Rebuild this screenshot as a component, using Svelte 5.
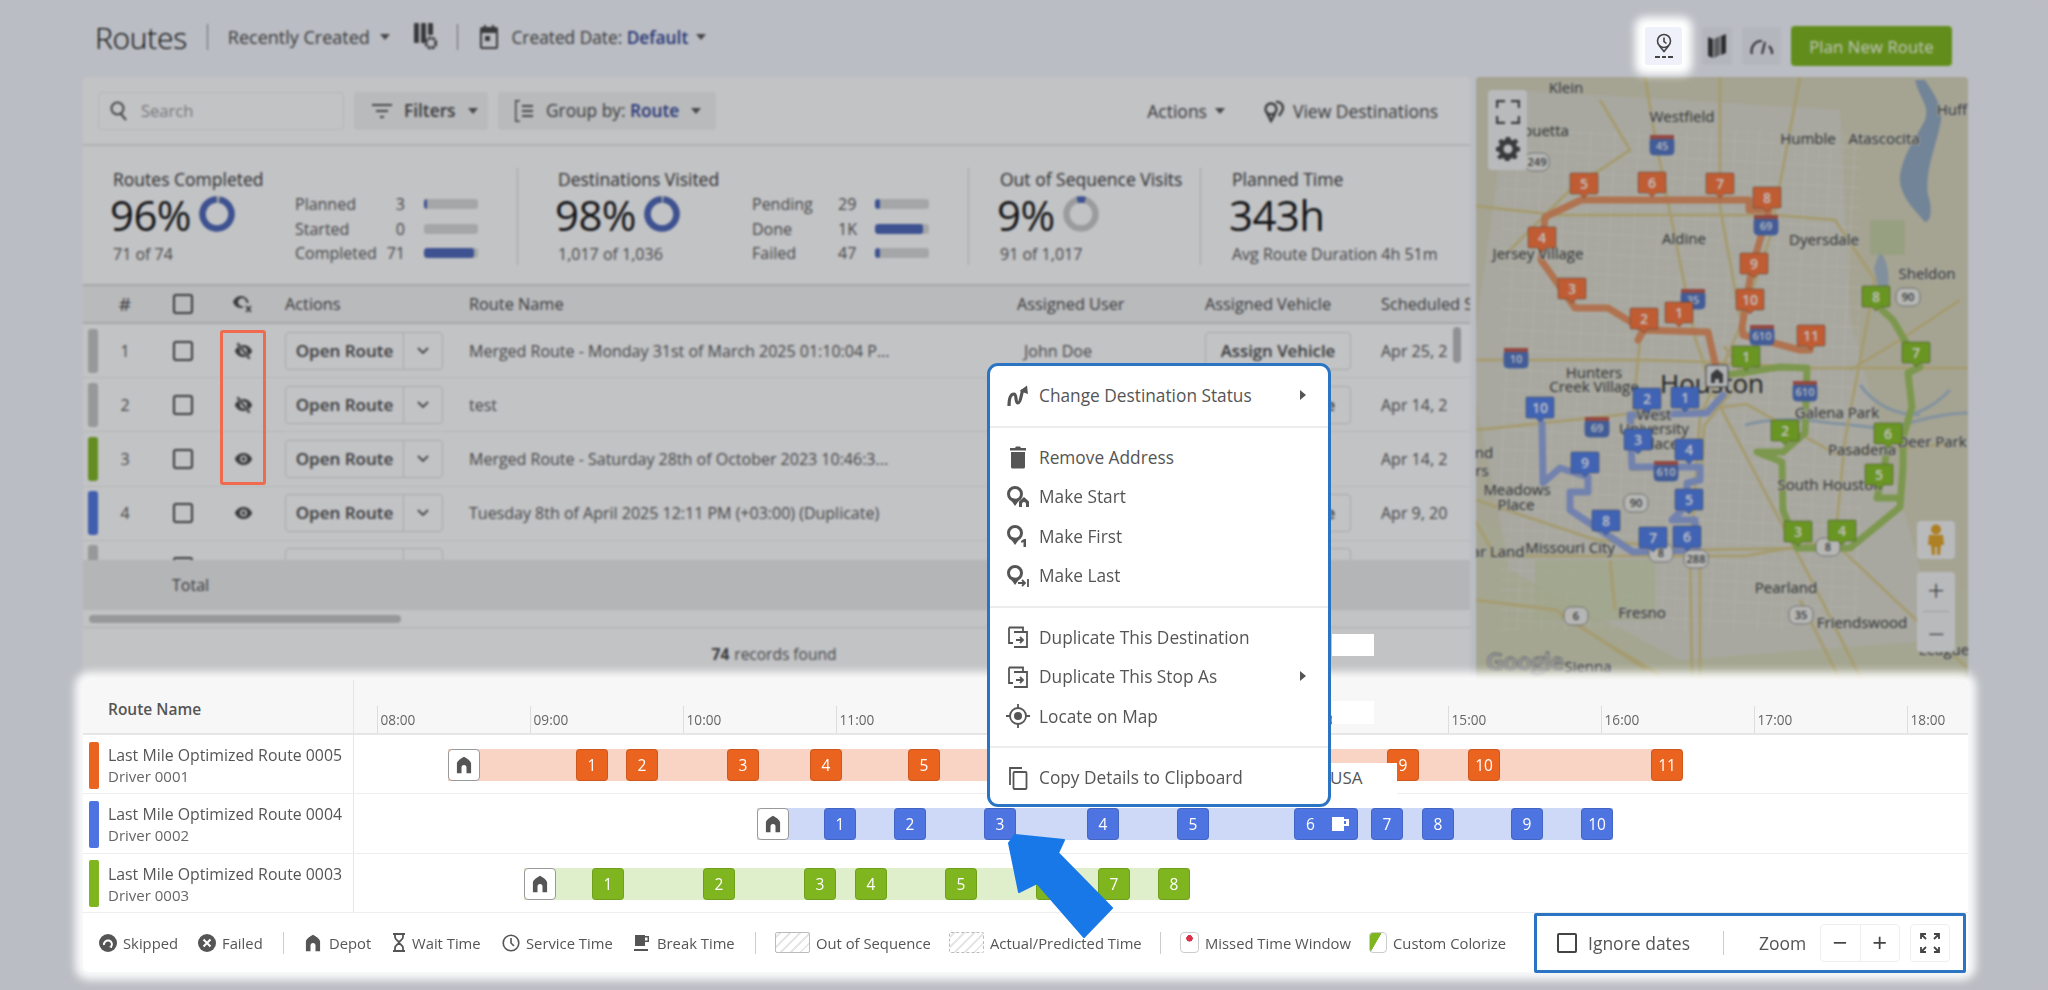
<script>
  const miniA = [
    { label: "Planned", value: "3", pct: 5 },
    { label: "Started", value: "0", pct: 0 },
    { label: "Completed", value: "71", pct: 92 }
  ];
  const miniB = [
    { label: "Pending", value: "29", pct: 10 },
    { label: "Done", value: "1K", pct: 88 },
    { label: "Failed", value: "47", pct: 10 }
  ];

  const rows = [
    { n: 1, color: "#c4c4c4", hidden: true, name: "Merged Route - Monday 31st of March 2025 01:10:04 P...", user: "John Doe", assign: true, date: "Apr 25, 2" },
    { n: 2, color: "#c4c4c4", hidden: true, name: "test", user: "", assign: true, date: "Apr 14, 2" },
    { n: 3, color: "#7fb51f", hidden: false, name: "Merged Route - Saturday 28th of October 2023 10:46:3...", user: "", assign: false, date: "Apr 14, 2" },
    { n: 4, color: "#4d74e0", hidden: false, name: "Tuesday 8th of April 2025 12:11 PM (+03:00) (Duplicate)", user: "", assign: true, date: "Apr 9, 20" },
    { n: "", color: "#c4c4c4", hidden: false, name: "", user: "", assign: true, date: "" }
  ];

  const hours = ["08:00", "09:00", "10:00", "11:00", "12:00", "13:00", "14:00", "15:00", "16:00", "17:00", "18:00"];

  // left edges are page x, chart starts at 354
  const gantt = [
    {
      name: "Last Mile Optimized Route 0005", driver: "Driver 0001", color: "#ea6420", light: "#f9d4c4",
      depot: 448, end: 1682,
      stops: [["1", 576], ["2", 626], ["3", 727], ["4", 810], ["5", 908], ["6", 1000], ["7", 1120], ["8", 1240], ["9", 1387], ["10", 1468], ["11", 1651]]
    },
    {
      name: "Last Mile Optimized Route 0004", driver: "Driver 0002", color: "#4d74e0", light: "#cdd9f7",
      depot: 757, end: 1613,
      stops: [["1", 824], ["2", 894], ["3", 984], ["4", 1087], ["5", 1177], ["6", 1294, true], ["7", 1371], ["8", 1422], ["9", 1511], ["10", 1581]]
    },
    {
      name: "Last Mile Optimized Route 0003", driver: "Driver 0003", color: "#7fb51f", light: "#dfeecb",
      depot: 524, end: 1190,
      stops: [["1", 592], ["2", 703], ["3", 804], ["4", 855], ["5", 945], ["6", 1036], ["7", 1098], ["8", 1158]]
    }
  ];

  const orange = "#fb7238", blue = "#4e7ce8", green = "#86c022";
  const pins = [
    ["5", 1584, 183, orange], ["6", 1652, 182, orange], ["7", 1720, 183, orange], ["8", 1767, 197, orange],
    ["4", 1542, 237, orange], ["9", 1754, 263, orange], ["3", 1572, 288, orange], ["10", 1750, 299, orange],
    ["2", 1644, 318, orange], ["1", 1679, 312, orange], ["11", 1811, 335, orange],
    ["8", 1876, 296, green], ["1", 1746, 356, green], ["7", 1916, 352, green], ["2", 1785, 430, green],
    ["6", 1888, 433, green], ["5", 1879, 474, green], ["3", 1798, 531, green], ["4", 1842, 530, green],
    ["1", 1685, 397, blue], ["2", 1647, 398, blue], ["10", 1540, 407, blue], ["3", 1638, 439, blue],
    ["4", 1689, 449, blue], ["9", 1585, 462, blue], ["5", 1689, 499, blue], ["8", 1606, 520, blue],
    ["7", 1653, 537, blue], ["6", 1687, 536, blue]
  ];

  const labels = [
    ["Klein", 1566, 93], ["ouetta", 1546, 136], ["Westfield", 1682, 122], ["Humble", 1808, 144],
    ["Atascocita", 1884, 144], ["Huff", 1952, 115], ["Jersey Village", 1538, 259], ["Aldine", 1684, 244],
    ["Dyersdale", 1824, 245], ["Sheldon", 1927, 279], ["Hunters", 1594, 378], ["Creek Village", 1594, 392],
    ["Galena Park", 1837, 418], ["West", 1654, 420], ["University", 1654, 434], ["Place", 1660, 449],
    ["Pasadena", 1862, 455], ["Deer Park", 1932, 447], ["Meadows", 1517, 495], ["Place", 1516, 510],
    ["South Houston", 1830, 490], ["Missouri City", 1570, 553], ["ar Land", 1498, 557], ["nd", 1484, 458],
    ["rs", 1482, 476], ["Pearland", 1786, 593], ["Fresno", 1642, 618], ["Friendswood", 1862, 628],
    ["Sienna", 1588, 672], ["League", 1944, 655]
  ];

  const shields = [
    ["45", 1662, 146, true], ["69", 1766, 226, true], ["610", 1762, 336, true], ["610", 1805, 392, true],
    ["10", 1516, 359, true], ["69", 1597, 428, true], ["610", 1666, 472, true], ["35", 1693, 300, true],
    ["90", 1636, 503, false], ["8", 1661, 553, false], ["288", 1696, 559, false], ["8", 1828, 547, false],
    ["6", 1576, 616, false], ["35", 1801, 615, false], ["249", 1537, 162, false], ["90", 1908, 297, false]
  ];
</script>

{#snippet caret()}
  <svg class="caret" viewBox="0 0 10 6"><path d="M0 0h10L5 6z" /></svg>
{/snippet}

{#snippet house(size)}
  <svg width={size} height={size} viewBox="0 0 24 24" fill="#555"><path d="M12 2C8 4 4 7 3.500 10V22H9v-7a3 3 0 0 1 6 0v7h5.500V10C20 7 16 4 12 2z" /></svg>
{/snippet}

{#snippet dup()}
  <svg width="24" height="24" viewBox="0 0 24 24" fill="none" stroke="#555" stroke-width="1.800">
    <path d="M7 2.500h10V6M3 6.500V18h4M3 2.500h4M3 2.500v4M8 7h13v15H8" />
    <path d="M10 15h7M14 12l3 3-3 3" />
  </svg>
{/snippet}

{#snippet pinIcon()}
  <circle cx="9" cy="9" r="6.500" fill="none" stroke="#555" stroke-width="3" />
  <path d="M3.500 13 9 21l4-5.500-2-1.500z" fill="#555" />
{/snippet}

<div class="page">
  <header class="top">
    <h1>Routes</h1>
    <i class="vline"></i>
    <span class="sort">Recently Created {@render caret()}</span>
    <svg class="cols-ic" viewBox="0 0 24 30" fill="#444">
      <rect x="1" y="1" width="5" height="20" rx="1" /><rect x="8" y="1" width="5" height="20" rx="1" /><rect x="15" y="1" width="5" height="12" rx="1" />
      <circle cx="18" cy="21" r="5" fill="none" stroke="#444" stroke-width="3" stroke-dasharray="3 1" />
    </svg>
    <i class="vline second"></i>
    <svg class="cal-ic" viewBox="0 0 20 24" fill="#444">
      <path d="M1 4a2 2 0 0 1 2-2h2V0h2v2h6V0h2v2h2a2 2 0 0 1 2 2v18a2 2 0 0 1-2 2H3a2 2 0 0 1-2-2zm2 4v14h14V8z" /><rect x="6" y="11" width="5" height="5" />
    </svg>
    <span class="date">Created Date: <b>Default</b> {@render caret()}</span>
    <div class="top-right">
      <button class="sq lit" aria-label="Timeline">
        <svg width="20" height="28" viewBox="0 0 20 28" fill="none" stroke="#444" stroke-width="1.600">
          <circle cx="10" cy="9" r="6.500" /><path d="M10 5.500V9.500l2.500 2M5.500 14l4.500 5.500 4.500-5.500" /><path d="M1 25h5M8 25h4M14 25h5" stroke-width="2" />
        </svg>
      </button>
      <button class="sq" aria-label="Map">
        <svg width="20" height="26" viewBox="0 0 20 26"><path d="M1 4l5 2v19l-5-2zM14 3l5-2v19l-5 2z" fill="#333" /><path d="M7 6l6-3v19l-6 3z" fill="#777" /></svg>
      </button>
      <button class="sq wide" aria-label="Gauge">
        <svg width="24" height="20" viewBox="0 0 24 20" fill="none" stroke="#333" stroke-width="2.200"><path d="M2 18A10 10 0 0 1 12 5M22 18a10 10 0 0 0-3-8" /><path d="M12 18 15 6" stroke-width="2" /></svg>
      </button>
      <button class="plan">Plan New Route</button>
    </div>
  </header>

  <div class="main">
    <section class="card">
      <div class="toolbar">
        <label class="search">
          <svg width="18" height="20" viewBox="0 0 18 20" fill="none" stroke="#555" stroke-width="2"><circle cx="7.500" cy="7.500" r="6" /><path d="m11 13 5 6" /></svg>
          <span>Search</span>
        </label>
        <button class="tool filters">
          <svg width="20" height="16" viewBox="0 0 20 16" fill="#555"><path d="M0 1h20v2H0zM4 7h12v2H4zM8 13h4v2H8z" /></svg>
          Filters {@render caret()}
        </button>
        <button class="tool grouped">
          <svg width="20" height="24" viewBox="0 0 20 24" fill="#555"><path d="M1 1h5v1.500H2.500v19H6V23H1zM8 6h11v2H8zM8 11h11v2H8zM8 16h11v2H8z" /></svg>
          <span>Group by: <b>Route</b></span> {@render caret()}
        </button>
        <span class="actions">Actions {@render caret()}</span>
        <span class="view">
          <svg width="22" height="24" viewBox="0 0 22 24" fill="none" stroke="#444" stroke-width="2.400"><circle cx="8" cy="10" r="5.500" /><path d="M4 14l4 8 4-7M13 3a6 6 0 0 1 7 6c0 3-3 6-4 8" /></svg>
          View Destinations
        </span>
      </div>

      <div class="stats">
        <i class="divider d1"></i><i class="divider d2"></i><i class="divider d3"></i>
        <div class="stat">
          <h3>Routes Completed</h3>
          <div class="big"><strong>96%</strong>
            <svg class="donut" viewBox="0 0 36 36"><circle cx="18" cy="18" r="14.500" stroke="#c9c9c9" /><circle cx="18" cy="18" r="14.500" stroke="#4a64b8" stroke-dasharray="87.500 91.100" transform="rotate(-80 18 18)" /></svg>
          </div>
          <p>71 of 74</p>
        </div>
        <div class="mini m1">
          {#each miniA as m}
            <span class="ml">{m.label}</span><span class="mv">{m.value}</span>
            <span class="track"><i style="width:{m.pct}%"></i></span>
          {/each}
        </div>
        <div class="stat">
          <h3>Destinations Visited</h3>
          <div class="big"><strong>98%</strong>
            <svg class="donut" viewBox="0 0 36 36"><circle cx="18" cy="18" r="14.500" stroke="#c9c9c9" /><circle cx="18" cy="18" r="14.500" stroke="#4a64b8" stroke-dasharray="88.500 91.100" transform="rotate(-84 18 18)" /></svg>
          </div>
          <p>1,017 of 1,036</p>
        </div>
        <div class="mini m2">
          {#each miniB as m}
            <span class="ml">{m.label}</span><span class="mv left">{m.value}</span>
            <span class="track"><i style="width:{m.pct}%"></i></span>
          {/each}
        </div>
        <div class="stat">
          <h3>Out of Sequence Visits</h3>
          <div class="big"><strong>9%</strong>
            <svg class="donut" viewBox="0 0 36 36"><circle cx="18" cy="18" r="14.500" stroke="#c9c9c9" /><circle cx="18" cy="18" r="14.500" stroke="#4a64b8" stroke-dasharray="8 91.100" transform="rotate(-105 18 18)" /></svg>
          </div>
          <p>91 of 1,017</p>
        </div>
        <div class="stat">
          <h3>Planned Time</h3>
          <div class="big"><strong>343h</strong></div>
          <p>Avg Route Duration 4h 51m</p>
        </div>
      </div>

      <div class="thead">
        <span></span><span class="hash">#</span>
        <span class="c"><i class="check"></i></span>
        <span class="c">
          <svg width="20" height="18" viewBox="0 0 20 18" fill="#444"><path d="M8 1C4 1 1 4 0 7c1 3 4 6 8 6l2-.2V11a4 4 0 1 1 3-4c0 .4.800.700 1.600.700h1.200C15 4 12 1 8 1z" /><path d="m13 11 5 6m0-6-5 6" stroke="#444" stroke-width="1.800" /></svg>
        </span>
        <span class="act-h">Actions</span><span>Route Name</span><span>Assigned User</span><span>Assigned Vehicle</span><span class="nowrap">Scheduled Start</span>
      </div>
      <div class="tbody">
        <div class="vscroll"></div>
        {#each rows as r}
          <div class="row">
            <span class="tab-wrap"><i class="tab" style="background:{r.color}"></i></span>
            <span class="num">{r.n}</span>
            <span class="c"><i class="check"></i></span>
            <span class="c">
              {#if r.n}
                <svg width="19" height="18" viewBox="0 0 22 20" fill="#444">
                  <path fill-rule="evenodd" d="M11 3C6 3 2.500 6.500 1 10c1.500 3.500 5 7 10 7s8.500-3.500 10-7c-1.500-3.500-5-7-10-7zm0 3a4 4 0 1 1 0 8 4 4 0 0 1 0-8z" />
                  {#if r.hidden}<path d="M4 1l14 18" stroke="#c2c2c2" stroke-width="4" /><path d="M4 1l14 18" stroke="#444" stroke-width="2" />{:else}<circle cx="11" cy="10" r="2.200" />{/if}
                </svg>
              {/if}
            </span>
            <span class="open">
              <b>Open Route</b>
              <i><svg width="12" height="8" viewBox="0 0 12 8" fill="none" stroke="#555" stroke-width="1.800"><path d="m1 1 5 5 5-5" /></svg></i>
            </span>
            <span class="rname">{r.name}</span>
            <span class="ruser">{r.user}</span>
            <span>{#if r.assign}<b class="assign">Assign Vehicle</b>{/if}</span>
            <span class="nowrap">{r.date}</span>
          </div>
        {/each}
      </div>
      <div class="total"><span>Total</span></div>
      <div class="hscroll"><i></i></div>
      <div class="records"><b>74</b> records found</div>
    </section>

    <section class="map">
      <svg class="map-svg" viewBox="1476 77 492 603" preserveAspectRatio="none">
        <defs>
          <pattern id="streets" width="24" height="20" patternUnits="userSpaceOnUse" patternTransform="rotate(3)">
            <path d="M0 0h24M0 10h24M0 0v20M12 0v20" stroke="#eaeae0" stroke-width=".8" fill="none" />
          </pattern>
        </defs>
        <rect x="1476" y="77" width="492" height="603" fill="#d8d4ba" />
        <path d="M1476 520 1700 620l268-30v90H1476z" fill="#d6d8b8" />
        <path d="M1510 90l330 20 10 210 90 320-260 20-170-90-40-200z" fill="#dcdacc" />
        <rect x="1500" y="130" width="360" height="500" fill="url(#streets)" opacity=".8" />
        <path d="M1915 80c5 20 15 25 10 40-10 20-20 30-25 55-2 20 15 35 25 47 7 0 7-17 3-27-3-25 7-45 12-70 5-15-5-30-15-45z" fill="#92a9c0" />
        <path d="M1880 250c6 10 10 20 8 40l-8 8-6-30z" fill="#a8bac9" />
        <g fill="none" stroke="#a8bccb" stroke-width="3">
          <path d="M1745 425c30-8 60-6 85-2 30 2 50 8 70 2 20-4 40-12 68-12" />
          <path d="M1860 385c15 20 35 30 60 30M1950 390c-15 15-25 20-40 25" />
        </g>
        <rect x="1870" y="220" width="35" height="35" fill="#c2cd9e" opacity=".8" />
        <rect x="1535" y="560" width="120" height="60" fill="#d2d8b0" opacity=".8" />
        <g fill="none" stroke="#d8c98c" stroke-width="3">
          <path d="M1476 360h170l65 2 105 6h152" />
          <path d="M1476 430l170-18 40 0 60-8 90 50 112-10" />
          <path d="M1645 77l10 60 40 200 20 60 100 190 60 120" />
          <path d="M1600 100l30 50-60 40-40 40-30 30" />
          <path d="M1800 77l-30 160-30 90-40 90-10 140 2 120" />
          <path d="M1560 215h215l60 5 40 60-30 160-10 100-90 16h-250l-50-90-15-130 5-70 40-60z" />
          <path d="M1476 600l80 10 90 60" />
          <path d="M1476 500l120 40 100 10 110-2M1840 548l127 120" />
          <path d="M1700 560v120M1960 300l-60 40-50 30" />
          <path d="M1640 340l-6 60-2 70 70-4 2-40 40-50-20-30" />
          <path d="M1720 77v130l20 110" />
          <path d="M1560 615l100 60M1800 600l40 80M1610 560l5 50" />
        </g>
        <g fill="none" stroke-linejoin="round" stroke-linecap="round">
          <polyline stroke="#e6915e" stroke-width="7" points="1718,376 1708,332 1643,330 1638,340 1644,330 1608,308 1575,308 1541,260 1545,217 1581,200 1749,200 1749,210 1769,210 1752,267 1742,327 1743,335 1800,350 1810,350" />
          <polyline stroke="#a0c45c" stroke-width="7" points="1718,376 1747,372 1780,367 1807,368 1805,433 1783,452 1757,452 1782,462 1783,510 1797,548 1850,548 1900,507 1903,467 1903,437 1912,407 1908,373 1920,367 1893,320 1882,310" />
          <polyline stroke="#a0c45c" stroke-width="7" points="1887,450 1883,475 1877,498 1900,498" />
          <polyline stroke="#92a6e0" stroke-width="7" points="1723,395 1707,413 1630,415 1632,467 1700,467 1700,480 1687,483 1687,505 1672,520 1695,520 1697,550 1633,552 1570,510 1570,492 1588,492 1588,477 1560,468 1543,483 1542,423" />
        </g>
        {#each labels as [t, x, y]}
          <text {x} {y} class="lbl">{t}</text>
        {/each}
        <text x="1712" y="393" class="lbl city">Houston</text>
        {#each shields as [t, x, y, inter]}
          <rect x={x - 12} y={y - 9} width="24" height="18" rx={inter ? 4 : 7} fill={inter ? "#4f72c0" : "#efefe8"} stroke={inter ? "#4f72c0" : "#777"} stroke-width=".8" />
          {#if inter}<rect x={x - 12} y={y - 11} width="24" height="4" fill="#c0574a" />{/if}
          <text {x} y={y + 4} class="shield" fill={inter ? "#eef1f8" : "#444"}>{t}</text>
        {/each}
        <rect x="1706" y="365" width="22" height="22" rx="2" fill="#e8e8e8" stroke="#444" />
        <path d="M1717 369l-6 5v9h4v-4h4v4h4v-9z" fill="#444" />
        {#each pins as [t, x, y, fill]}
          <path d="M{x - 13} {y - 10}h26a1.500 1.500 0 0 1 1 1.500v18a1.500 1.500 0 0 1-1 1.500h-9l-4 4-4-4h-9a1.500 1.500 0 0 1-1-1.500v-18a1.500 1.500 0 0 1 1-1.500z" {fill} stroke="#333" stroke-opacity=".4" />
          <text {x} y={y + 6} class="pin">{t}</text>
        {/each}
        <text x="1486" y="670" class="google">Google</text>
      </svg>
      <div class="map-ctl top-ctl">
        <svg width="24" height="24" viewBox="0 0 24 24" fill="none" stroke="#444" stroke-width="2.400"><path d="M1 8V1h8M15 1h8v7M23 16v7h-8M9 23H1v-7" /></svg>
        <svg width="24" height="24" viewBox="0 0 24 24" fill="#444"><path fill-rule="evenodd" d="M10 1h4l.600 3 2.400 1 2.600-1.700 2.800 2.800L20 8.700l1 2.400 3 .6v4l-3 .6-1 2.400 1.700 2.600-2.800 2.800-2.600-1.700-2.400 1-.6 3h-4l-.6-3-2.400-1-2.600 1.700-2.800-2.800L4 18.700l-1-2.400-3-.6v-4l3-.6 1-2.400-1.700-2.600 2.800-2.800L7 5l2.400-1zM12 9a4.500 4.500 0 1 0 0 9 4.500 4.500 0 0 0 0-9z" transform="translate(0 -1.500)" /></svg>
      </div>
      <div class="map-ctl peg">
        <svg width="22" height="32" viewBox="0 0 22 32" fill="#e2a322"><circle cx="11" cy="5.500" r="5" /><path d="M4 11h14l1 10h-3l-1 10h-3v-8h-2v8H7L6 21H3z" /></svg>
      </div>
      <div class="map-ctl zoom">
        <span>+</span><hr /><span>−</span>
      </div>
    </section>
  </div>

  <section class="panel">
    <div class="g-head">
      <div class="g-title">Route Name</div>
      <div class="g-hours">
        {#each hours as h}<span class="hour">{h}</span>{/each}
      </div>
    </div>
    {#each gantt as g}
      <div class="g-row">
        <div class="g-name">
          <i class="g-tab" style="background:{g.color}"></i>
          <div>
            <div class="g-route">{g.name}</div>
            <div class="g-driver">{g.driver}</div>
          </div>
        </div>
        <div class="g-chart">
          <div class="g-bar" style="left:{g.depot - 354}px;width:{g.end - g.depot}px;background:{g.light}"></div>
          <div class="g-depot" style="left:{g.depot - 354}px">{@render house(20)}</div>
          {#each g.stops as [t, x, brk]}
            <div class="g-stop" class:brk style="left:{x - 354}px;background:{g.color}">
              <span>{t}</span>
              {#if brk}
                <svg width="18" height="16" viewBox="0 0 18 16" fill="#fff"><path d="M0 1h12v14H0zM12 3h5v7h-5V8h2V5h-2z" /></svg>
              {/if}
            </div>
          {/each}
        </div>
      </div>
    {/each}
    <div class="legend">
      <div class="lg-items">
        <span class="li" style="width:99px">
          <svg width="18" height="18" viewBox="0 0 18 18"><circle cx="9" cy="9" r="9" fill="#555" /><path d="M5 11a4 4 0 1 1 7 2" fill="none" stroke="#fff" stroke-width="2" /><path d="m10 13 3 1 0-3" fill="#fff" /></svg>Skipped
        </span>
        <span class="li" style="width:85px">
          <svg width="18" height="18" viewBox="0 0 18 18"><circle cx="9" cy="9" r="9" fill="#555" /><path d="m5.500 5.500 7 7m0-7-7 7" stroke="#fff" stroke-width="2" /></svg>Failed
        </span>
        <i class="lg-sep"></i>
        <span class="li" style="width:89px">{@render house(20)}Depot</span>
        <span class="li" style="width:110px">
          <svg width="14" height="19" viewBox="0 0 14 19" fill="none" stroke="#555" stroke-width="1.800"><path d="M1 1h12M1 18h12M3 1v3c0 3 4 4 4 5.500S3 12 3 15v3M11 1v3c0 3-4 4-4 5.500s4 2.500 4 5.500v3" /></svg>Wait Time
        </span>
        <span class="li" style="width:131px">
          <svg width="18" height="18" viewBox="0 0 18 18" fill="none" stroke="#555" stroke-width="1.600"><circle cx="9" cy="9" r="7.800" /><path d="M9 4v5l3 3" /></svg>Service Time
        </span>
        <span class="li" style="width:122px">
          <svg width="18" height="18" viewBox="0 0 18 18" fill="#555"><path d="M2 1h10v11H2zM12 2h4v6h-4V6.500h2.500v-3H12zM1 15h14v2H1z" /></svg>Break Time
        </span>
        <i class="lg-sep"></i>
        <span class="li" style="width:174px"><i class="swatch solid"></i>Out of Sequence</span>
        <span class="li" style="width:211px"><i class="swatch dashed"></i>Actual/Predicted Time</span>
        <i class="lg-sep"></i>
        <span class="li" style="width:189px"><i class="sw-missed"></i>Missed Time Window</span>
        <span class="li"><i class="sw-custom"></i>Custom Colorize</span>
      </div>
      <div class="ignore">
        <i class="check big-check"></i>
        <span class="ig-label">Ignore dates</span>
        <i class="ig-sep"></i>
        <span class="ig-zoom">Zoom</span>
        <span class="zoom-btns"><b>−</b><b>+</b></span>
        <span class="zoom-fit">
          <svg width="20" height="20" viewBox="0 0 20 20" fill="none" stroke="#444" stroke-width="1.800"><path d="M1 6V1h5M1 1l5 5M19 6V1h-5M19 1l-5 5M1 14v5h5M1 19l5-5M19 14v5h-5M19 19l-5-5" /></svg>
        </span>
      </div>
    </div>
  </section>

  <div class="overlay"></div>
  <div class="redbox"></div>
  <div class="chip c1"></div>
  <div class="chip c2"></div>
  <div class="chip usa">USA</div>

  <div class="menu">
    <div class="group">
      <div class="mi">
        <svg width="24" height="24" viewBox="0 0 24 24" fill="none" stroke="#555" stroke-width="3.200"><path d="M3 22C3 14 5 10 8 10s1 9 4 9 3-10 5-13" /><path d="M13.500 7 21 1.500 22 10z" fill="#555" stroke="none" /></svg>
        Change Destination Status <em></em>
      </div>
    </div>
    <div class="group">
      <div class="mi">
        <svg width="24" height="24" viewBox="0 0 24 24" fill="#555"><path d="M5 7h14v15a1.500 1.500 0 0 1-1.500 1.500h-11A1.500 1.500 0 0 1 5 22zM4 3h5l1-1.500h4L15 3h5v2.500H4z" /></svg>
        Remove Address
      </div>
      <div class="mi">
        <svg width="24" height="24" viewBox="0 0 24 24">{@render pinIcon()}<path d="M18 12l-5 4.500V22h3v-3a2 2 0 0 1 4 0v3h3v-5.500z" fill="#555" /></svg>
        Make Start
      </div>
      <div class="mi">
        <svg width="24" height="24" viewBox="0 0 24 24">{@render pinIcon()}<path d="M15 17l3-2h2v8h-2.500v-5l-2 1z" fill="#555" /></svg>
        Make First
      </div>
      <div class="mi">
        <svg width="24" height="24" viewBox="0 0 24 24">{@render pinIcon()}<path d="M12 19h7M16 16l3 3-3 3M22 15v8" fill="none" stroke="#555" stroke-width="1.800" /></svg>
        Make Last
      </div>
    </div>
    <div class="group">
      <div class="mi">{@render dup()}Duplicate This Destination</div>
      <div class="mi">{@render dup()}Duplicate This Stop As <em></em></div>
      <div class="mi">
        <svg width="24" height="24" viewBox="0 0 24 24" fill="none" stroke="#555" stroke-width="1.800"><circle cx="12" cy="12" r="8" /><circle cx="12" cy="12" r="4" fill="#555" stroke="none" /><path d="M12 0v4M12 20v4M0 12h4M20 12h4" /></svg>
        Locate on Map
      </div>
    </div>
    <div class="group last">
      <div class="mi">
        <svg width="24" height="24" viewBox="0 0 24 24" fill="none" stroke="#555" stroke-width="1.800"><path d="M4 19V2h12" /><rect x="7.500" y="6" width="13" height="17" rx="1" /></svg>
        Copy Details to Clipboard
      </div>
    </div>
  </div>

  <svg class="arrow" width="110" height="105" viewBox="1005 833 110 105"><path d="M1015 835 1064 840 1058 853 1112 908 1084 937 1037 883 1019 892 1009 843z" fill="#1878e8" stroke="#1878e8" stroke-width="2" stroke-linejoin="round" /></svg>
</div>

<style>
  :global(body) {
    margin: 0;
    font-family: "Open Sans", "Liberation Sans", sans-serif;
    color: #444;
  }

  * {
    box-sizing: border-box;
  }

  i,
  em {
    font-style: normal;
  }

  button {
    font: inherit;
    border: 0;
    padding: 0;
    color: inherit;
  }

  .page {
    position: relative;
    width: 2048px;
    height: 990px;
    overflow: hidden;
    background: #f5f7fc;
    padding-top: 10px;
  }

  .overlay {
    position: absolute;
    inset: 0;
    z-index: 2;
    background: rgba(30, 32, 40, 0.27);
    backdrop-filter: blur(0.8px);
  }

  /* top bar */
  .top {
    display: flex;
    align-items: center;
    height: 54px;
    padding-left: 95px;
    margin-bottom: 13px;
  }

  h1 {
    margin: 0 20px 0 0;
    font-size: 30px;
    font-weight: 300;
    color: #000;
    letter-spacing: -0.3px;
  }

  .vline {
    width: 1px;
    height: 26px;
    background: #888;
    margin-right: 20px;
  }

  .vline.second {
    margin: 0 21px 0 20px;
  }

  .sort,
  .date {
    font-size: 18px;
    display: inline-flex;
    align-items: center;
    gap: 6px;
    white-space: pre;
  }

  .date {
    font-size: 17.300px;
    gap: 0;
  }

  .date b {
    color: #2c3f94;
    font-weight: 600;
    margin-right: 8px;
  }

  .caret {
    width: 10px;
    height: 6px;
    fill: #555;
    flex: none;
  }

  .cols-ic {
    width: 24px;
    height: 30px;
    margin-left: 23px;
  }

  .cal-ic {
    width: 20px;
    height: 24px;
    margin-right: 12px;
  }

  .top-right {
    margin-left: auto;
    margin-right: 96px;
    margin-top: 18px;
    display: flex;
    align-items: center;
    gap: 10px;
  }

  .sq {
    width: 30px;
    height: 38px;
    background: #eceef6;
    border-radius: 3px;
    display: flex;
    align-items: center;
    justify-content: center;
  }

  .sq.wide {
    width: 39px;
  }

  .sq.lit {
    width: 37px;
    margin-right: 10px;
    position: relative;
    z-index: 3;
    background: #eff1fa;
    box-shadow: 0 0 9px 10px #fff;
  }

  .plan {
    width: 161px;
    height: 40px;
    background: #7cb618;
    color: #fbfff0;
    border-radius: 4px;
    font-size: 16.500px;
    font-weight: 500;
    letter-spacing: 0.2px;
  }

  /* table card */
  .main {
    display: flex;
    gap: 6px;
    padding-left: 83px;
    height: 603px;
  }

  .card {
    width: 1387px;
    background: #fff;
    border-radius: 4px;
    display: flex;
    flex-direction: column;
    overflow: hidden;
  }

  .toolbar {
    display: flex;
    align-items: center;
    height: 69px;
    padding: 0 32px 0 15px;
    border-bottom: 2px solid #e6e6e6;
  }

  .search {
    width: 246px;
    height: 38px;
    border: 1px solid #eee;
    border-radius: 4px;
    display: flex;
    align-items: center;
    gap: 13px;
    padding-left: 11px;
    margin-right: 10px;
    font-size: 16.500px;
    color: #999;
  }

  .tool {
    height: 38px;
    background: #f3f3f3;
    border-radius: 4px;
    display: flex;
    align-items: center;
    gap: 12px;
    font-size: 17.300px;
  }

  .filters {
    width: 134px;
    padding-left: 18px;
    font-weight: 600;
    margin-right: 10px;
  }

  .grouped {
    width: 218px;
    padding-left: 16px;
    gap: 12px;
  }

  .tool b {
    color: #2c3f94;
    font-weight: 600;
  }

  .actions,
  .view {
    display: flex;
    align-items: center;
    font-size: 17.500px;
    font-weight: 500;
    gap: 8px;
  }

  .actions {
    margin-left: auto;
    margin-right: 38px;
  }

  .stats {
    position: relative;
    display: grid;
    grid-template-columns: 182px 263px 194px 248px 232px 1fr;
    height: 140px;
    padding: 20px 0 0 30px;
    border-bottom: 2px solid #d9d9d9;
  }

  .divider {
    position: absolute;
    top: 22px;
    height: 97px;
    width: 1px;
    background: #d4d4d4;
  }

  .d1 {
    left: 434px;
  }

  .d2 {
    left: 885px;
  }

  .d3 {
    left: 1117px;
  }

  .stat h3 {
    margin: 0;
    font-size: 17.500px;
    font-weight: 500;
    line-height: 26px;
    white-space: nowrap;
    color: #333;
  }

  .stat p {
    margin: 7px 0 0;
    font-size: 16px;
    line-height: 22px;
    white-space: nowrap;
    color: #555;
  }

  .big {
    display: flex;
    align-items: center;
    gap: 8px;
    height: 44px;
    margin-left: -3px;
  }

  .big strong {
    font-size: 42px;
    font-weight: 500;
    color: #111;
    letter-spacing: -0.6px;
  }

  .donut {
    width: 36px;
    height: 36px;
    fill: none;
  }

  .donut circle {
    stroke-width: 6.500;
  }

  .mini {
    display: grid;
    grid-template-rows: repeat(3, 24.500px);
    align-items: center;
    margin-top: 26px;
    height: 74px;
    font-size: 16px;
    color: #555;
  }

  .m1 {
    grid-template-columns: 88px 22px 73px;
  }

  .m2 {
    grid-template-columns: 86px 37px 54px;
  }

  .mv {
    text-align: right;
  }

  .mv.left {
    text-align: left;
  }

  .m1 .track {
    margin-left: 19px;
  }

  .track {
    display: block;
    height: 10px;
    width: 54px;
    background: #d8d8d8;
    border-radius: 3px;
    overflow: hidden;
  }

  .track i {
    display: block;
    height: 100%;
    background: #4a64b8;
    border-radius: 3px;
  }

  /* table */
  .thead,
  .row {
    display: grid;
    grid-template-columns: 22px 40px 76px 44px 204px 548px 188px 176px 1fr;
    align-items: center;
  }

  .thead {
    height: 38px;
    background: #f3f3f3;
    font-size: 16.300px;
    font-weight: 500;
    color: #444;
    border-bottom: 2px solid #d9d9d9;
    white-space: nowrap;
  }

  .hash,
  .num {
    text-align: center;
  }

  .hash {
    font-size: 19px;
  }

  .act-h {
    padding-left: 20px;
  }

  .c {
    display: flex;
    justify-content: center;
  }

  .check {
    display: block;
    width: 20px;
    height: 20px;
    border: 2px solid #444;
    border-radius: 3px;
  }

  .tbody {
    position: relative;
    height: 236px;
    overflow: hidden;
    flex: none;
  }

  .vscroll {
    position: absolute;
    top: 3px;
    right: 9px;
    width: 8px;
    height: 36px;
    border-radius: 4px;
    background: #bbb;
  }

  .row {
    height: 54.200px;
    border-bottom: 1px solid #eee;
    color: #555;
    font-size: 16px;
  }

  .tab-wrap {
    display: block;
    padding-left: 5px;
  }

  .tab {
    display: block;
    width: 10px;
    height: 44px;
    border-radius: 3px;
  }

  .open {
    margin-left: 20px;
    display: flex;
    width: 158px;
    height: 38px;
    border: 1px solid #ddd;
    border-radius: 4px;
  }

  .open b {
    width: 118px;
    line-height: 36px;
    text-align: center;
    font-size: 17px;
    font-weight: 600;
    color: #444;
    border-right: 1px solid #ddd;
    white-space: nowrap;
  }

  .open i {
    flex: 1;
    display: flex;
    align-items: center;
    justify-content: center;
  }

  .rname {
    white-space: nowrap;
  }

  .ruser {
    padding-left: 7px;
  }

  .assign {
    display: block;
    width: 146px;
    height: 38px;
    line-height: 36px;
    text-align: center;
    border: 1px solid #ddd;
    border-radius: 4px;
    font-weight: 600;
    font-size: 16.800px;
    color: #444;
  }

  .nowrap {
    white-space: nowrap;
  }

  .total {
    height: 50px;
    background: #ececec;
    display: flex;
    align-items: center;
    padding-left: 89px;
    font-size: 16px;
    font-weight: 500;
    flex: none;
  }

  .hscroll {
    height: 18px;
    padding: 5px 6px;
    border-bottom: 1px solid #e4e4e4;
    flex: none;
  }

  .hscroll i {
    display: block;
    width: 312px;
    height: 8px;
    background: #c4c4c4;
    border-radius: 4px;
  }

  .records {
    flex: 1;
    display: flex;
    align-items: center;
    justify-content: center;
    gap: 5px;
    font-size: 15.500px;
    color: #555;
    margin-left: -5px;
  }

  .records b {
    color: #444;
  }

  /* map */
  .map {
    position: relative;
    width: 492px;
    border-radius: 4px;
    overflow: hidden;
  }

  .map-svg {
    display: block;
    width: 100%;
    height: 100%;
  }

  .lbl {
    font-size: 15px;
    fill: #3d3d3d;
    text-anchor: middle;
    paint-order: stroke;
    stroke: #d6d6c8;
    stroke-width: 2px;
  }

  .lbl.city {
    font-size: 26px;
    font-weight: 500;
    fill: #222;
  }

  .shield {
    font-size: 11px;
    font-weight: 600;
    text-anchor: middle;
  }

  .pin {
    font-size: 14px;
    font-weight: 600;
    fill: #fff;
    text-anchor: middle;
  }

  .google {
    font-size: 24px;
    font-weight: 600;
    fill: #dcdcdc;
    stroke: #777;
    stroke-width: 0.8px;
    letter-spacing: -0.5px;
  }

  .map-ctl {
    position: absolute;
    background: #f3f3f3;
    border-radius: 4px;
    display: flex;
    flex-direction: column;
    align-items: center;
    justify-content: space-around;
  }

  .top-ctl {
    top: 13px;
    left: 12px;
    width: 39px;
    height: 80px;
    padding: 3px 0;
  }

  .peg {
    top: 444px;
    left: 441px;
    width: 38px;
    height: 38px;
    justify-content: center;
  }

  .zoom {
    top: 495px;
    left: 441px;
    width: 38px;
    height: 80px;
    font-size: 30px;
    line-height: 1;
    color: #444;
    font-weight: 300;
  }

  .zoom hr {
    width: 26px;
    margin: 0;
    border: 0;
    border-top: 1px solid #ccc;
  }

  /* highlighted timeline */
  .panel {
    position: relative;
    z-index: 3;
    margin: 0 80px 0 83px;
    height: 292px;
    background: #fff;
    border-radius: 6px;
    box-shadow: 0 0 8px 8px rgba(255, 255, 255, 0.92);
  }

  .g-head {
    display: flex;
    height: 55px;
    background: #f7f7f7;
    border-bottom: 2px solid #e6e6e6;
    border-radius: 6px 6px 0 0;
  }

  .g-title {
    width: 271px;
    flex: none;
    padding: 2px 0 0 25px;
    line-height: 55px;
    border-right: 1px solid #e6e6e6;
    font-size: 15.500px;
    font-weight: 600;
    color: #555;
  }

  .g-hours {
    flex: 1;
    min-width: 0;
    overflow: hidden;
    display: flex;
    padding: 26px 0 0 22.600px;
  }

  .hour {
    width: 153px;
    flex: none;
    padding-left: 3px;
    border-left: 1px solid #ddd;
    font-size: 13.600px;
    line-height: 27px;
    color: #666;
  }

  .g-row {
    display: flex;
    height: 59.300px;
    border-bottom: 1px solid #eee;
  }

  .g-name {
    width: 271px;
    flex: none;
    display: flex;
    align-items: center;
    gap: 9px;
    padding: 2px 0 0 6px;
    border-right: 1px solid #e6e6e6;
    color: #555;
  }

  .g-tab {
    width: 10px;
    height: 47px;
    border-radius: 2px;
    flex: none;
  }

  .g-route {
    font-size: 15.850px;
    line-height: 22px;
    white-space: nowrap;
  }

  .g-driver {
    font-size: 15px;
    line-height: 20px;
    color: #666;
  }

  .g-chart {
    position: relative;
    flex: 1;
  }

  .g-bar,
  .g-depot,
  .g-stop {
    position: absolute;
    top: 14px;
    height: 32px;
  }

  .g-depot {
    width: 32px;
    background: #fff;
    border: 1px solid #999;
    border-radius: 4px;
    display: flex;
    align-items: center;
    justify-content: center;
  }

  .g-stop {
    width: 32px;
    border-radius: 4px;
    border: 1px solid rgba(0, 0, 0, 0.12);
    color: #fff;
    font-size: 15.500px;
    font-weight: 500;
    display: flex;
    align-items: center;
    justify-content: center;
  }

  .g-stop.brk {
    width: 64px;
    justify-content: flex-start;
    gap: 17px;
    padding-left: 11px;
  }

  .legend {
    display: flex;
    align-items: center;
    height: 60px;
    justify-content: space-between;
  }

  .lg-items {
    display: flex;
    align-items: center;
    padding-left: 16px;
    font-size: 14.800px;
    color: #555;
  }

  .li {
    display: flex;
    align-items: center;
    gap: 6px;
    flex: none;
    white-space: nowrap;
  }

  .lg-sep {
    width: 1px;
    height: 22px;
    background: #ccc;
    margin-right: 19px;
    flex: none;
  }

  .swatch {
    width: 35px;
    height: 21px;
    border: 1px solid #bbb;
    border-radius: 2px;
    background: repeating-linear-gradient(-45deg, #fff 0 5px, #e6e6e6 5px 7px);
  }

  .swatch.dashed {
    border: 1px dashed #bbb;
  }

  .sw-missed {
    width: 19px;
    height: 21px;
    border: 1px solid #ccc;
    border-radius: 4px;
    background: radial-gradient(circle at 50% 28%, #d8324a 0 3px, #fff 3.500px);
  }

  .sw-custom {
    width: 18px;
    height: 21px;
    border: 1px solid #ccc;
    border-radius: 4px;
    background: linear-gradient(120deg, #7fb51f 0 42%, #fff 44%);
  }

  .ignore {
    width: 432px;
    height: 60px;
    flex: none;
    display: flex;
    align-items: center;
    padding-left: 20px;
    border: 3px solid #2b74c4;
    border-radius: 2px;
    color: #555;
    margin-right: 2px;
  }

  .big-check {
    width: 20px;
    height: 20px;
    border-radius: 2px;
    margin-right: 11px;
  }

  .ig-label {
    font-size: 17.500px;
    width: 135px;
  }

  .ig-sep {
    width: 1px;
    height: 24px;
    background: #ccc;
    margin-right: 35px;
  }

  .ig-zoom {
    font-size: 17.500px;
    width: 61px;
  }

  .zoom-btns {
    display: flex;
    width: 80px;
    height: 38px;
    border: 1px solid #eee;
    border-radius: 4px;
    margin-right: 10px;
  }

  .zoom-btns b {
    flex: 1;
    font-size: 26px;
    font-weight: 400;
    line-height: 34px;
    text-align: center;
    color: #444;
  }

  .zoom-btns b + b {
    border-left: 1px solid #eee;
  }

  .zoom-fit {
    width: 40px;
    height: 38px;
    border: 1px solid #eee;
    border-radius: 4px;
    display: flex;
    align-items: center;
    justify-content: center;
  }

  /* overlays */
  .redbox {
    position: absolute;
    z-index: 3;
    left: 220px;
    top: 330px;
    width: 46px;
    height: 155px;
    border: 3px solid #ef6a4e;
    border-radius: 3px;
  }

  .chip {
    position: absolute;
    z-index: 3;
    background: #fff;
  }

  .c1 {
    left: 1332px;
    top: 634px;
    width: 42px;
    height: 22px;
  }

  .c2 {
    left: 1332px;
    top: 701px;
    width: 42px;
    height: 23px;
  }

  .usa {
    left: 1325px;
    top: 763px;
    width: 72px;
    height: 32px;
    padding-left: 5px;
    font-size: 17px;
    line-height: 30px;
    color: #555;
  }

  .menu {
    position: absolute;
    z-index: 4;
    left: 987px;
    top: 363px;
    width: 344px;
    height: 444px;
    background: #fff;
    border: 3px solid #2b74c4;
    border-radius: 11px;
    overflow: hidden;
    color: #555;
    font-size: 17.300px;
  }

  .menu .group {
    padding: 10px 0;
    border-bottom: 2px solid #ececec;
  }

  .menu .group.last {
    border-bottom: 0;
  }

  .mi {
    position: relative;
    height: 39.500px;
    display: flex;
    align-items: center;
    gap: 9px;
    padding-left: 16px;
  }

  .mi em {
    position: absolute;
    right: 22px;
    top: 14px;
    border: 5px solid transparent;
    border-left: 6px solid #555;
    border-right: 0;
  }

  .arrow {
    position: absolute;
    z-index: 5;
    left: 1005px;
    top: 833px;
  }
</style>
